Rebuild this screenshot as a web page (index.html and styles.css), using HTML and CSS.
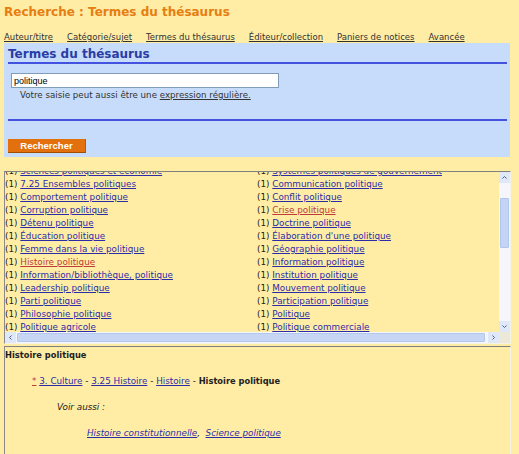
FILE: index.html
```html
<!DOCTYPE html>
<html lang="fr">
<head>
<meta charset="utf-8">
<title>Recherche : Termes du thésaurus</title>
<link rel="stylesheet" href="styles.css">
</head>
<body>
<h1 class="title">Recherche : Termes du thésaurus</h1>
<nav class="nav">
  <a href="#">Auteur/titre</a>
  <a href="#">Catégorie/sujet</a>
  <a href="#">Termes du thésaurus</a>
  <a href="#">Éditeur/collection</a>
  <a href="#">Paniers de notices</a>
  <a href="#">Avancée</a>
</nav>
<section class="panel">
  <h2 class="panel-title">Termes du thésaurus</h2>
  <div class="rule"></div>
  <input class="query" type="text" value="politique">
  <p class="hint">Votre saisie peut aussi être une <a href="#">expression régulière.</a></p>
  <div class="rule rule-low"></div>
  <button class="btn" type="button">Rechercher</button>
</section>

<div class="frame frame-list">
  <div class="list-view">
    <div class="list">
      <div class="item"><span>(1)</span> <a href="#">Sciences politiques et économie</a></div>
      <div class="item"><span>(1)</span> <a href="#">Systèmes politiques de gouvernement</a></div>
      <div class="item"><span>(1)</span> <a href="#">7.25 Ensembles politiques</a></div>
      <div class="item"><span>(1)</span> <a href="#">Communication politique</a></div>
      <div class="item"><span>(1)</span> <a href="#">Comportement politique</a></div>
      <div class="item"><span>(1)</span> <a href="#">Conflit politique</a></div>
      <div class="item"><span>(1)</span> <a href="#">Corruption politique</a></div>
      <div class="item"><span>(1)</span> <a href="#" class="seen">Crise politique</a></div>
      <div class="item"><span>(1)</span> <a href="#">Détenu politique</a></div>
      <div class="item"><span>(1)</span> <a href="#">Doctrine politique</a></div>
      <div class="item"><span>(1)</span> <a href="#">Éducation politique</a></div>
      <div class="item"><span>(1)</span> <a href="#">Élaboration d'une politique</a></div>
      <div class="item"><span>(1)</span> <a href="#">Femme dans la vie politique</a></div>
      <div class="item"><span>(1)</span> <a href="#">Géographie politique</a></div>
      <div class="item"><span>(1)</span> <a href="#" class="seen">Histoire politique</a></div>
      <div class="item"><span>(1)</span> <a href="#">Information politique</a></div>
      <div class="item"><span>(1)</span> <a href="#">Information/bibliothèque, politique</a></div>
      <div class="item"><span>(1)</span> <a href="#">Institution politique</a></div>
      <div class="item"><span>(1)</span> <a href="#">Leadership politique</a></div>
      <div class="item"><span>(1)</span> <a href="#">Mouvement politique</a></div>
      <div class="item"><span>(1)</span> <a href="#">Parti politique</a></div>
      <div class="item"><span>(1)</span> <a href="#">Participation politique</a></div>
      <div class="item"><span>(1)</span> <a href="#">Philosophie politique</a></div>
      <div class="item"><span>(1)</span> <a href="#">Politique</a></div>
      <div class="item"><span>(1)</span> <a href="#">Politique agricole</a></div>
      <div class="item"><span>(1)</span> <a href="#">Politique commerciale</a></div>
    </div>
  </div>
  <div class="vscroll">
    <div class="sbtn"><svg width="5" height="3" viewBox="0 0 5 3"><polyline points="0.5,2.5 2.5,0.5 4.5,2.5" fill="none" stroke="#4d6185" stroke-width="1"/></svg></div>
    <div class="vtrack"><div class="vthumb"></div></div>
    <div class="sbtn"><svg width="5" height="3" viewBox="0 0 5 3"><polyline points="0.5,0.5 2.5,2.5 4.5,0.5" fill="none" stroke="#4d6185" stroke-width="1"/></svg></div>
  </div>
  <div class="hscroll">
    <div class="sbtn"><svg width="3" height="5" viewBox="0 0 3 5"><polyline points="2.5,0.5 0.5,2.5 2.5,4.5" fill="none" stroke="#4d6185" stroke-width="1"/></svg></div>
    <div class="htrack"><div class="hthumb"></div></div>
    <div class="sbtn"><svg width="3" height="5" viewBox="0 0 3 5"><polyline points="0.5,0.5 2.5,2.5 0.5,4.5" fill="none" stroke="#4d6185" stroke-width="1"/></svg></div>
  </div>
  <div class="corner"></div>
</div>

<div class="frame frame-detail">
  <p class="detail-title">Histoire politique</p>
  <p class="crumbs"><a href="#" class="seen">*</a> <a href="#">3. Culture</a> - <a href="#">3.25 Histoire</a> - <a href="#">Histoire</a> - <b>Histoire politique</b></p>
  <p class="see">Voir aussi :</p>
  <p class="see-links"><a href="#">Histoire constitutionnelle</a>, &nbsp;<a href="#">Science politique</a></p>
</div>
</body>
</html>
```

FILE: styles.css
```css
* { box-sizing: border-box; }
html, body { margin: 0; }
body {
  background: #ffeda6;
  font-family: "DejaVu Sans", Verdana, sans-serif;
  font-size: 8.5px;
  color: #222;
  padding: 0 4px;
  width: 519px;
  height: 454px;
  overflow: hidden;
}
.title {
  margin: 4px 0 0;
  font-size: 12px;
  line-height: 16px;
  color: #e67e12;
  font-weight: bold;
}
.nav {
  display: flex;
  gap: 14px;
  margin-top: 11px;
  line-height: 12px;
}
.nav a { color: #333; text-decoration: underline; }

.panel {
  margin-top: 0;
  width: 506px;
  background: #c6dcfa;
  padding: 3px 3px 4px 4px;
}
.panel-title {
  margin: 0;
  font-size: 12px;
  line-height: 16px;
  color: #2b3ca5;
}
.rule { height: 2px; background: #4353e0; }
.rule-low { margin-top: 18px; }
.query {
  display: block;
  margin: 9px 0 0 3px;
  width: 268px;
  height: 15px;
  border: 1px solid #7f9db9;
  font: 9px "Liberation Sans", Arial, sans-serif;
  color: #000;
  padding: 0 2px;
  background: #fff;
}
.hint {
  margin: 1px 0 0 12px;
  font-size: 8.7px;
  line-height: 12px;
  color: #333;
}
.hint a { color: #333; }
.btn {
  display: block;
  margin-top: 18px;
  width: 78px;
  height: 14px;
  padding: 0;
  background: #e2700c;
  border: none;
  border-bottom: 1px solid #a04d00;
  border-right: 1px solid #b85a00;
  color: #fff;
  font: bold 9.5px "Liberation Sans", Arial, sans-serif;
}

.frame {
  width: 507px;
  border-top: 1px solid #808080;
  border-left: 1px solid #8a8a8a;
  border-right: 1px solid #f6f3e6;
}
.frame-list {
  margin-top: 14px;
  display: grid;
  grid-template-columns: 494px 11px;
  grid-template-rows: 160px 11px;
  border-bottom: 1px solid #f6f3e6;
}
.list-view {
  overflow: hidden;
  display: flex;
  flex-direction: column;
  justify-content: flex-end;
}
.list {
  flex-shrink: 0;
  display: grid;
  grid-template-columns: 252px 1fr;
  line-height: 13px;
  font-size: 8.8px;
  margin-bottom: -2px;
}
.item { white-space: nowrap; }
a { color: #2c2ca8; }
a.seen { color: #c03a3a; }

.vscroll {
  display: flex;
  flex-direction: column;
  background: #f4f6fb;
}
.sbtn {
  flex: 0 0 11px;
  width: 11px;
  height: 11px;
  display: flex;
  align-items: center;
  justify-content: center;
  background: #dfe8f8;
}
.vtrack { flex: 1; padding: 15px 1px 0 1px; }
.vthumb {
  height: 50px;
  background: #c3d4f5;
  border: 1px solid #b1c6ee;
  border-radius: 1px;
}
.hscroll {
  display: flex;
  background: #f4f6fb;
}
.htrack { flex: 1; padding: 1px 3px 1px 1px; }
.hthumb {
  height: 100%;
  background: #c6d6f4;
  border: 1px solid #b3c7ec;
  border-radius: 1px;
}
.corner { background: #ece9d8; }

.frame-detail {
  margin-top: 2px;
  height: 120px;
  padding-top: 2px;
  line-height: 13px;
  font-size: 8.8px;
}
.frame-detail p { margin: 0; }
.detail-title { font-weight: bold; font-size: 8.3px; }
.crumbs { margin-top: 13px !important; padding-left: 27px; }
.crumbs b { font-size: 8.3px; }
.see { margin-top: 13px !important; padding-left: 52px; font-style: italic; }
.see-links { margin-top: 13px !important; padding-left: 82px; font-style: italic; }
```
